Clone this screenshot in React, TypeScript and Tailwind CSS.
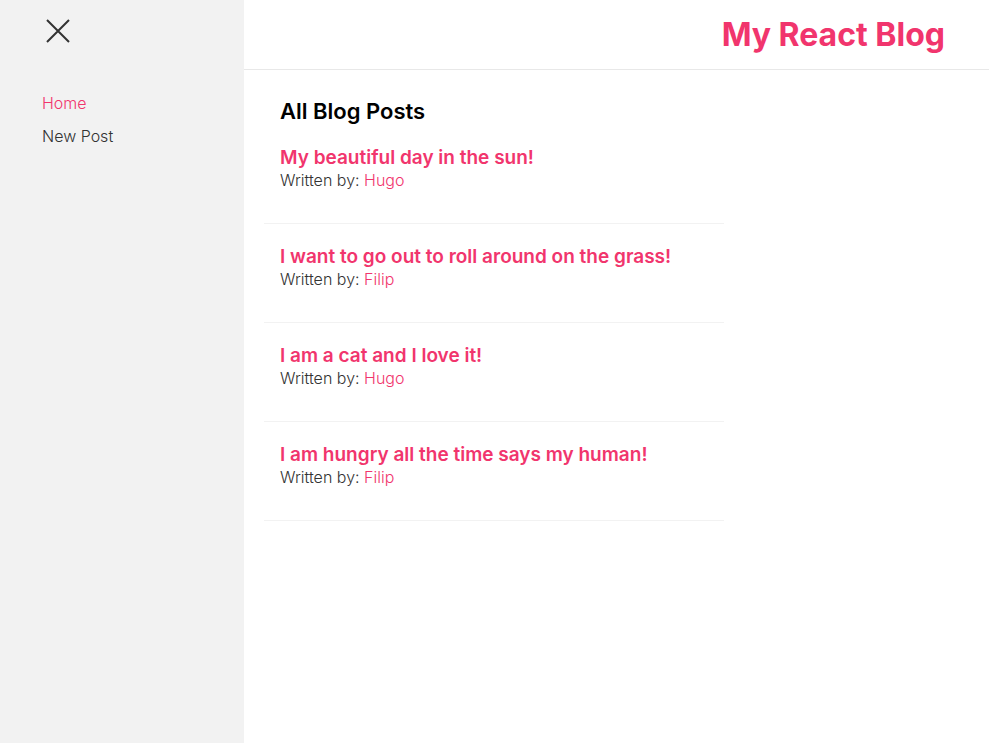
import { useState } from 'react';

const posts = [
  { id: 1, title: 'My beautiful day in the sun!', author: 'Hugo' },
  { id: 2, title: 'I want to go out to roll around on the grass!', author: 'Filip' },
  { id: 3, title: 'I am a cat and I love it!', author: 'Hugo' },
  { id: 4, title: 'I am hungry all the time says my human!', author: 'Filip' },
];

const font = { fontFamily: 'Inter, "Noto Sans", sans-serif' };

export default function App() {
  const [active, setActive] = useState('Home');

  return (
    <div className="flex min-h-[743px] w-full bg-white text-[#333]" style={font}>
      <aside className="w-[244px] shrink-0 bg-[#f2f2f2]">
        <button type="button" className="ml-[46px] mt-[19px] block text-[#333]" aria-label="Close menu">
          <svg width="24" height="24" viewBox="0 0 24 24" fill="none" stroke="currentColor" strokeWidth="2">
            <path d="M1 1L23 23M23 1L1 23" />
          </svg>
        </button>
        <nav className="mt-[48px] flex flex-col gap-[9px] pl-[42px] text-[16px] font-light">
          {['Home', 'New Post'].map((item) => (
            <a
              key={item}
              href="#"
              onClick={(event) => {
                event.preventDefault();
                setActive(item);
              }}
              className={item === active ? 'text-[#f1356d]' : 'text-[#333]'}
            >
              {item}
            </a>
          ))}
        </nav>
      </aside>

      <main className="flex-1">
        <header className="flex h-[70px] items-center justify-end border-b border-[#e8e8e8] pr-[44px]">
          <h1 className="text-[32px] font-bold text-[#f1356d]">My React Blog</h1>
        </header>

        <section className="px-5 pt-[25px]">
          <h2 className="pl-4 text-[22px] font-semibold text-black">All Blog Posts</h2>
          <div className="w-[460px]">
            {posts.map((post) => (
              <div key={post.id} className="border-b border-[#f2f2f2] px-4 pb-[32px] pt-[22px] first:pt-[19px]">
                <a href="#" className="block text-[19px] font-semibold leading-[22px] text-[#f1356d]">
                  {post.title}
                </a>
                <p className="text-[16px] font-light leading-[22px] text-[#333]">
                  Written by: <span className="text-[#f1356d]">{post.author}</span>
                </p>
              </div>
            ))}
          </div>
        </section>
      </main>
    </div>
  );
}
